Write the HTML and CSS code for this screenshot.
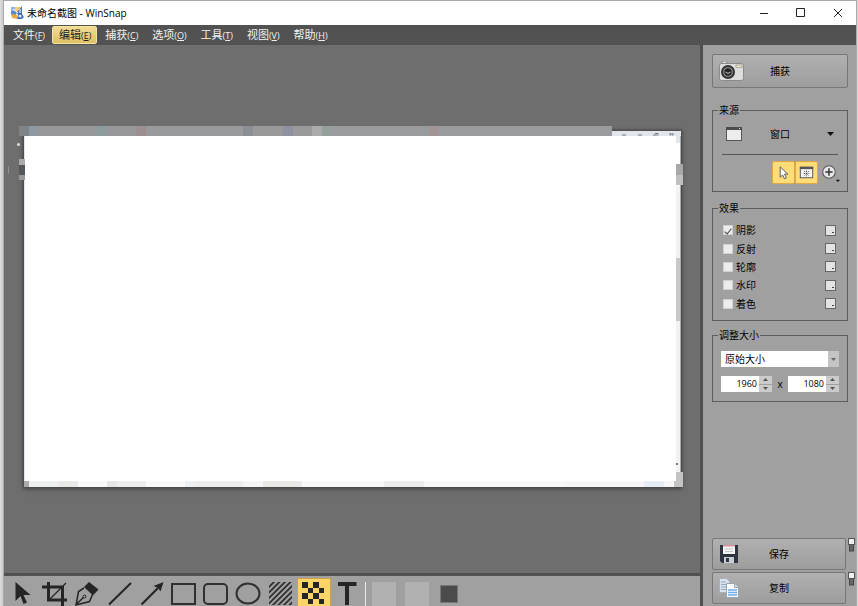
FILE: index.html
```html
<!DOCTYPE html>
<html lang="zh-CN">
<head>
<meta charset="utf-8">
<title>未命名截图 - WinSnap</title>
<link rel="stylesheet" href="styles.css">
</head>
<body>
<div class="window">
  <header class="titlebar">
    <svg class="app-icon" width="14" height="14" viewBox="0 0 14 14">
      <rect x="1" y="1" width="5" height="4" fill="#8fb3e6"/><rect x="5" y="1" width="6" height="6" fill="#f6d063"/>
      <path d="M1 5h5v4H1z" fill="#5b88cf"/><path d="M1 8l6 1 1 4-6-1z" fill="#e8a843"/>
      <path d="M12 0v8l2 3-2 2H7l1-4-2-2z" fill="#4d7cc4"/><path d="M9 7l3 1-1 4-3 1z" fill="#2f5aa4"/>
      <path d="M3 3l5 4M10 3v4" stroke="#fff" stroke-width="1"/><circle cx="10" cy="10" r="1.500" fill="#dfe9f8"/>
    </svg>
    <h1 class="title">未命名截图 - WinSnap</h1>
    <div class="caption">
      <button aria-label="最小化"><svg width="10" height="10" viewBox="0 0 10 10"><path d="M1 5.500h8"/></svg></button>
      <button aria-label="最大化"><svg width="10" height="10" viewBox="0 0 10 10"><path d="M.5.500h8v8h-8z"/></svg></button>
      <button aria-label="关闭"><svg width="10" height="10" viewBox="0 0 10 10"><path d="M1 1l8 8M9 1l-8 8"/></svg></button>
    </div>
  </header>
  <nav class="menubar">
    <button>文件<small>(<u>F</u>)</small></button>
    <button class="active">编辑<small>(<u>E</u>)</small></button>
    <button>捕获<small>(<u>C</u>)</small></button>
    <button>选项<small>(<u>O</u>)</small></button>
    <button>工具<small>(<u>T</u>)</small></button>
    <button>视图<small>(<u>V</u>)</small></button>
    <button>帮助<small>(<u>H</u>)</small></button>
  </nav>
  <div class="body">
    <main class="work">
      <section class="canvas">
        <div class="shot">
          <svg class="shot-caption" width="64" height="5" viewBox="0 0 64 5"><path d="M5 4h4M21 4h4M36 4h4M38 2.500h3v2M52 3h5M53 4h1M55 4h1" stroke="#777" fill="none"/></svg>
          <div class="page"></div>
          <div class="scroll"></div>
          <div class="mosaic mosaic-top"></div>
          <div class="mosaic mosaic-bottom"></div>
          <div class="mosaic mosaic-left"></div>
          <div class="mosaic mosaic-right"></div>
          <div class="mosaic mosaic-corner"></div>
          <div class="dot"></div>
          <div class="tick"></div>
          <div class="caret"></div>
        </div>
      </section>
      <footer class="toolbar">
        <div class="tools">
          <button aria-label="选择"><svg viewBox="0 0 32 30"><path d="M8.500 6v19l5-5 3 8 3.500-1.500-3.500-7.500h7z" fill="#252525"/></svg></button>
          <button aria-label="裁剪"><svg viewBox="0 0 32 30"><path d="M3 11h20.500v19M9.500 6v18H28" fill="none" stroke="#252525" stroke-width="3"/><path d="M10 24L27 7" stroke="#252525" stroke-width="1.200"/></svg></button>
          <button aria-label="钢笔"><svg viewBox="0 0 32 30"><path d="M18 6l9.500 7.500-5.500 6-9-8.500z" fill="#252525"/><path d="M13 12L7.500 15.500 5 29l13.500-3.500 3-7M5 28.500l7.500-7" fill="none" stroke="#252525" stroke-width="1.500"/><circle cx="13.500" cy="20.500" r="1.500" fill="none" stroke="#252525"/></svg></button>
          <button aria-label="直线"><svg viewBox="0 0 32 30"><path d="M5 28.500L27 7" stroke="#252525" stroke-width="2"/></svg></button>
          <button aria-label="箭头"><svg viewBox="0 0 32 30"><path d="M5.500 28.500L22 12" stroke="#252525" stroke-width="2.200"/><path d="M27.500 6l-3 9.500-2.500-3.500-4.500-2z" fill="#252525"/></svg></button>
          <button aria-label="矩形"><svg viewBox="0 0 32 30"><rect x="4" y="8" width="23" height="20" fill="none" stroke="#303030" stroke-width="2"/></svg></button>
          <button aria-label="圆角矩形"><svg viewBox="0 0 32 30"><rect x="4" y="8" width="23" height="20" rx="4" fill="none" stroke="#303030" stroke-width="2"/></svg></button>
          <button aria-label="椭圆"><svg viewBox="0 0 32 30"><ellipse cx="16" cy="17.500" rx="11.500" ry="10" fill="none" stroke="#303030" stroke-width="2"/></svg></button>
          <button aria-label="阴影线"><svg viewBox="0 0 32 30"><defs><clipPath id="hatch"><rect x="4" y="6" width="23" height="23"/></clipPath></defs><g clip-path="url(#hatch)"><path d="M-2 17L12 3M-2 22.500L18 2.500M-2 28L24 2M0 31.500L30 1.500M4 33L32 5M9 33.500L33 9.500M15 33L34 14M20 33.500L34 19.500" stroke="#303030" stroke-width="1.800"/></g></svg></button>
          <button class="on" aria-label="马赛克"><svg viewBox="0 0 32 30"><path d="M5 6h6v6H5zM16 6h6v6h-6zM11 12h5v5h-5zM22 12h5v5h-5zM5 17h6v6H5zM16 17h6v6h-6zM11 23h5v5h-5zM22 23h5v5h-5z" fill="#252525"/></svg></button>
          <button aria-label="文字"><svg viewBox="0 0 32 30"><path d="M7 6h18.500v4H18v19h-4V10H7z" fill="#252525"/></svg></button>
        </div>
        <span class="sep"></span>
        <div class="swatches">
          <button class="swatch" aria-label="线条颜色"></button>
          <button class="swatch" aria-label="填充颜色"></button>
          <button class="swatch dark" aria-label="颜色"></button>
        </div>
      </footer>
    </main>
    <aside class="side">
      <button class="big">
        <svg width="26" height="20" viewBox="0 0 26 20"><rect x="3" y="0" width="5" height="4" rx="1" fill="#d8d8d8" stroke="#888"/><rect x=".5" y="2.500" width="24" height="17" rx="2" fill="#ddd" stroke="#8a8a8a"/><rect x="17" y="4" width="6" height="2.500" fill="#eee7bf" stroke="#888" stroke-width=".6"/><circle cx="9" cy="11" r="7" fill="#353535"/><circle cx="9" cy="11" r="4.800" fill="#999"/><circle cx="9" cy="11" r="3.700" fill="#222"/><path d="M6.500 11q2.500 3 5 0" stroke="#ccc" fill="none"/></svg>
        <span>捕获</span>
      </button>
      <fieldset class="source">
        <legend>来源</legend>
        <button class="source-pick">
          <svg width="16" height="14" viewBox="0 0 16 14"><rect x=".5" y=".5" width="15" height="13" fill="#ededed" stroke="#555"/><path d="M0 0h16v3H0z" fill="#4c4c4c"/><path d="M13 1.500h1" stroke="#eee"/></svg>
          <span>窗口</span>
          <svg class="drop" width="7" height="4" viewBox="0 0 7 4"><path d="M0 0h7L3.500 4z" fill="#111"/></svg>
        </button>
        <div class="modes">
          <button class="on" aria-label="光标"><svg viewBox="0 0 22 22"><path d="M7.500 5v11l2.600-2.400 1.900 4 2-1-1.900-3.900H15.500z" fill="#fff" stroke="#555"/></svg></button>
          <button class="on" aria-label="窗口背景"><svg viewBox="0 0 22 22"><rect x="4.500" y="5.500" width="13" height="11" fill="#f6f6f2" stroke="#555"/><path d="M4 5h14v2.500H4z" fill="#555"/><path d="M8.500 9.500l5 5M13.500 9.500l-5 5M11 9v6M8 12h6" stroke="#555" stroke-width="1" stroke-dasharray="1.500 1"/></svg></button>
          <button aria-label="延时"><svg viewBox="0 0 22 22"><circle cx="10.500" cy="10.500" r="6" fill="#e8e8e8" stroke="#555"/><path d="M10.500 7v7M7 10.500h7" stroke="#333" stroke-width="1.400"/><path d="M17 18h4l-2 2z" fill="#111"/></svg></button>
        </div>
      </fieldset>
      <fieldset class="effects">
        <legend>效果</legend>
        <div class="effect-list">
          <div class="effect"><label><input type="checkbox" checked>阴影</label><button aria-label="阴影设置"></button></div>
          <div class="effect"><label><input type="checkbox">反射</label><button aria-label="反射设置"></button></div>
          <div class="effect"><label><input type="checkbox">轮廓</label><button aria-label="轮廓设置"></button></div>
          <div class="effect"><label><input type="checkbox">水印</label><button aria-label="水印设置"></button></div>
          <div class="effect"><label><input type="checkbox">着色</label><button aria-label="着色设置"></button></div>
        </div>
      </fieldset>
      <fieldset class="resize">
        <legend>调整大小</legend>
        <div class="select">
          <select aria-label="调整大小"><option>原始大小</option></select>
          <span class="arrow"><svg width="5" height="3" viewBox="0 0 5 3"><path d="M0 0h5L2.500 3z" fill="#666"/></svg></span>
        </div>
        <div class="dims">
          <div class="spin"><input type="number" value="1960" aria-label="宽度"><span class="steps"><button aria-label="增加宽度"><svg width="5" height="3" viewBox="0 0 5 3"><path d="M0 3h5L2.500 0z"/></svg></button><button aria-label="减少宽度"><svg width="5" height="3" viewBox="0 0 5 3"><path d="M0 0h5L2.500 3z"/></svg></button></span></div>
          <span>x</span>
          <div class="spin"><input type="number" value="1080" aria-label="高度"><span class="steps"><button aria-label="增加高度"><svg width="5" height="3" viewBox="0 0 5 3"><path d="M0 3h5L2.500 0z"/></svg></button><button aria-label="减少高度"><svg width="5" height="3" viewBox="0 0 5 3"><path d="M0 0h5L2.500 3z"/></svg></button></span></div>
        </div>
      </fieldset>
      <div class="actions">
        <div class="action">
          <button class="big">
            <svg width="20" height="20" viewBox="0 0 20 20"><path d="M1 1h18v18H3l-2-2z" fill="#2f343e"/><rect x="4" y="1" width="12" height="9" fill="#f4f4f4"/><path d="M4 1h12v1.500H4z" fill="#dc8f9f"/><path d="M6 5h8M6 7.500h8" stroke="#c4c4c4"/><rect x="5" y="13" width="10" height="6" fill="#c9ced6"/><rect x="7" y="14" width="3" height="4" fill="#2f343e"/></svg>
            <span>保存</span>
          </button>
          <svg class="pin" width="7" height="14" viewBox="0 0 7 14"><rect x="1.500" y="6" width="4" height="7" fill="#666" stroke="#444"/><rect x=".5" y=".5" width="6" height="6" fill="#eee" stroke="#555"/></svg>
        </div>
        <div class="action">
          <button class="big">
            <svg width="20" height="20" viewBox="0 0 20 20"><path d="M.5.500h7l3 3v11H.5z" fill="#dce3ea" stroke="#a9b2bc"/><path d="M2 4h5M2 6.500h5M2 9h5M2 11.500h5" stroke="#8facc9"/><path d="M7.500 5.500h8l4 4v10h-12z" fill="#f7fbff" stroke="#9ba5b0"/><path d="M15.500 5.500v4h4" fill="#d5dde5" stroke="#9ba5b0"/><path d="M9 12h9M9 14.500h9M9 17h9" stroke="#6faee8" stroke-width="1.500"/></svg>
            <span>复制</span>
          </button>
          <svg class="pin" width="7" height="14" viewBox="0 0 7 14"><rect x="1.500" y="6" width="4" height="7" fill="#666" stroke="#444"/><rect x=".5" y=".5" width="6" height="6" fill="#eee" stroke="#555"/></svg>
        </div>
      </div>
    </aside>
  </div>
</div>
</body>
</html>
```

FILE: styles.css
```css
* { box-sizing: border-box; }

body {
  margin: 0;
  height: 100vh;
  display: flex;
  padding: 1px 2px 0 4px;
  background: linear-gradient(90deg, #dedede, #c4c4c4 4px, #d8d8d8 5px);
  font-family: "Open Sans", "Noto Sans CJK SC", sans-serif;
  font-size: 10px;
  line-height: 14px;
  color: #000;
  overflow: hidden;
}

button, input, select {
  font: inherit;
  color: inherit;
  margin: 0;
  padding: 0;
  border: 0;
  background: none;
}

button svg { display: block; }

.window {
  flex: 1;
  min-width: 0;
  display: flex;
  flex-direction: column;
  box-shadow: 0 0 0 1px #a9a9a9;
}

.titlebar {
  display: flex;
  align-items: center;
  flex: none;
  height: 24px;
  padding-left: 6px;
  gap: 3px;
  background: #fff;
}

.title {
  flex: 1;
  margin: 0;
  font-size: 10px;
  font-weight: 400;
  color: #000;
}

.caption { display: flex; }

.caption button {
  display: grid;
  place-items: center;
  width: 37px;
  height: 24px;
}

.caption svg {
  fill: none;
  stroke: #222;
}

.menubar {
  display: flex;
  align-items: center;
  flex: none;
  gap: 1px;
  height: 20px;
  padding-left: 2px;
  background: #525252;
}

.menubar button {
  height: 18px;
  padding: 0 5px 0 6px;
  border: 1px solid transparent;
  border-radius: 2px;
  font-size: 11px;
  line-height: 16px;
  color: #f2f2f2;
}

.menubar small { font-size: 9px; }

.menubar .active {
  border-color: #f6e3a0;
  background: linear-gradient(#f1dc92, #dfc067);
  color: #222;
}

.body {
  flex: 1;
  min-height: 0;
  display: flex;
}

.work {
  flex: 1;
  min-width: 0;
  display: flex;
  flex-direction: column;
}

.canvas {
  flex: 1;
  display: flex;
  padding: 86px 19px 86px 20px;
  background: #6e6e6e;
}

.shot {
  position: relative;
  flex: 1;
  display: flex;
  padding: 5px 0 6px 1px;
  background: #e1e6ec;
  box-shadow: 0 0 3px 1px #414141, 0 3px 5px #5a5a5a;
}

.shot-caption {
  position: absolute;
  top: 0;
  right: 0;
}

.page { flex: 1; background: #fff; }

.scroll {
  width: 5px;
  border-right: 1px solid #aaa;
  background: linear-gradient(#e1e6ec 7px, #fff 7px 50px, #f2f2f2 50px 122px, #c9c9c9 122px 185px, #f2f2f2 185px);
}

.mosaic { position: absolute; }

.mosaic-top {
  top: -5px;
  left: -5px;
  right: 69px;
  height: 10px;
  background: linear-gradient(90deg, #7f8488 10px, #8d98a1 10px 20px, #96999b 20px 78px, #8c9b9c 78px 88px, #98989c 88px 117px, #9c8f8f 117px 127px, #999a9c 127px 224px, #8b8e95 224px 234px, #999 234px 264px, #8f90a0 264px 274px, #9a9a9a 274px 293px, #a9aaa9 293px 303px, #95a09c 303px 312px, #999c9f 312px 410px, #a29494 410px 420px, #999c9f 420px);
}

.mosaic-bottom {
  bottom: 0;
  left: 0;
  right: 0;
  height: 6px;
  background: linear-gradient(90deg, #aaa 5px, #eef0f0 5px 34px, #e9e9e8 34px 54px, #f9f9f9 54px 83px, #e6e6e4 83px 93px, #eee 93px 122px, #f9f9f9 122px 161px, #edf0f3 161px 171px, #ededed 171px 219px, #f5f5f5 219px 239px, #e9e9e8 239px 278px, #f8f8f8 278px 360px, #ececec 360px 400px, #f8f8f8 400px 540px, #f5f5f5 540px 620px, #e7ebf5 620px 640px, #f6f6f6 640px);
}

.mosaic-left {
  top: 28px;
  left: -5px;
  width: 6px;
  height: 21px;
  background: linear-gradient(#aaa 6px, #54585b 6px 16px, #999 16px);
}

.mosaic-right {
  top: 33px;
  right: -2px;
  width: 7px;
  height: 21px;
  background: linear-gradient(#a8a8a8 11px, #c0c0c0 11px);
}

.mosaic-corner {
  bottom: 0;
  right: -2px;
  width: 9px;
  height: 15px;
  background: #c3c5c5;
  clip-path: polygon(2px 0, 100% 0, 100% 100%, 0 100%, 0 9px, 2px 9px);
}

.dot {
  position: absolute;
  top: 12px;
  left: -7px;
  width: 3px;
  height: 3px;
  border-radius: 2px;
  background: #ddd;
}

.tick {
  position: absolute;
  top: 35px;
  left: -16px;
  width: 2px;
  height: 8px;
  border-left: 1px solid #909090;
  border-radius: 2px;
}

.caret {
  position: absolute;
  right: 3px;
  bottom: 22px;
  width: 2px;
  height: 2px;
  background: #777;
}

.toolbar {
  flex: none;
  display: flex;
  height: 33px;
  padding-left: 3px;
  border-top: 3px solid #505050;
  background: #a0a0a0;
}

.tools {
  display: flex;
  width: 356px;
}

.tools button {
  flex: 1;
  min-width: 0;
}

.tools svg {
  width: 32px;
  height: 30px;
}

.tools .on {
  margin-top: 2px;
  border: 1px solid #cf9f4c;
  border-bottom: 0;
  background: #fdd466;
  overflow: hidden;
}

.tools .on svg { margin: -3px 0 0 -1px; }

.sep {
  width: 1px;
  margin: 6px 6px 0 2px;
  background: #e6e9ec;
}

.swatches {
  display: flex;
  align-items: center;
  gap: 9px;
  padding-top: 6px;
}

.swatch {
  width: 24px;
  height: 24px;
  background: #b1b1b1;
}

.swatch.dark {
  width: 18px;
  height: 18px;
  margin-left: 2px;
  border: 1px solid #777;
  background: #4b4b4b;
}

.side {
  flex: none;
  display: flex;
  flex-direction: column;
  width: 156px;
  padding: 9px 8px 2px 9px;
  border-left: 3px solid #505050;
  background: #a0a0a0;
}

.big {
  display: grid;
  grid-template-columns: 26px 1fr 26px;
  align-items: center;
  height: 34px;
  padding: 0 6px;
  border: 1px solid #777;
  border-radius: 2px;
  background: linear-gradient(#b0b0b0, #9d9d9d);
  text-align: center;
}

fieldset {
  min-width: 0;
  margin: 0;
  padding: 0 8px;
  border: 1px solid #5d5d5d;
}

legend {
  margin-left: -3px;
  padding: 0 1px;
  height: 14px;
}

.source {
  height: 89px;
  margin-top: 15px;
  padding: 0 9px;
}

.source legend { margin-left: -4px; }

.source-pick {
  display: grid;
  grid-template-columns: 26px 1fr 26px;
  align-items: center;
  width: 100%;
  height: 38px;
  padding: 0 4px 4px;
  border-bottom: 1px solid #555;
}

.source-pick .drop { justify-self: end; }

.modes {
  display: flex;
  justify-content: flex-end;
  margin: 6px -3px 0 0;
}

.modes button {
  width: 23px;
  height: 23px;
}

.modes .on {
  border: 1px solid #e0a744;
  border-radius: 2px;
  background: #fedc78;
}

.effects {
  height: 120px;
  margin-top: 9px;
  padding: 6px 10px 0;
}

.effects legend { margin-left: -5px; }

.effect-list {
  display: grid;
  grid-auto-rows: 1fr;
  height: 92px;
}

.effect {
  display: flex;
  align-items: center;
  justify-content: space-between;
}

.effect label {
  display: flex;
  align-items: center;
  gap: 3px;
}

.effect input {
  appearance: none;
  display: grid;
  place-items: center;
  width: 10px;
  height: 10px;
  border: 1px solid #d0d0d0;
  background: #ececec;
}

.effect input:checked::after {
  content: "";
  width: 3px;
  height: 6px;
  border: solid #444;
  border-width: 0 1px 1px 0;
  transform: rotate(40deg);
}

.effect button {
  width: 11px;
  height: 11px;
  margin-right: 1px;
  border: 1px solid #666;
  background: linear-gradient(#444, #444) 6px 6px / 2px 1px no-repeat, #e3e3e3;
}

.resize {
  height: 74px;
  margin-top: 7px;
}

.select {
  position: relative;
  margin-top: 9px;
}

.select select {
  appearance: none;
  display: block;
  width: 100%;
  height: 16px;
  padding-left: 4px;
  border-radius: 0;
  background: #fff;
}

.select .arrow {
  position: absolute;
  inset: 0 0 0 auto;
  display: grid;
  place-items: center;
  width: 11px;
  background: #c4c4c4;
  pointer-events: none;
}

.dims {
  display: flex;
  align-items: center;
  justify-content: space-between;
  margin-top: 9px;
}

.spin {
  display: flex;
  width: 51px;
  height: 16px;
  font-size: 9px;
}

.spin input {
  appearance: textfield;
  flex: 1;
  min-width: 0;
  padding-right: 2px;
  background: #fff;
  text-align: right;
}

.spin input::-webkit-inner-spin-button { appearance: none; margin: 0; }

.steps {
  display: grid;
  width: 13px;
  gap: 1px;
}

.steps button {
  display: grid;
  place-items: center;
  background: #cbcbcb;
}

.steps svg { fill: #555; }

.actions {
  display: flex;
  flex-direction: column;
  gap: 2px;
  margin: auto -7px 0 0;
}

.action {
  display: flex;
  gap: 2px;
}

.actions .big {
  flex: 1;
  height: 32px;
}
```
